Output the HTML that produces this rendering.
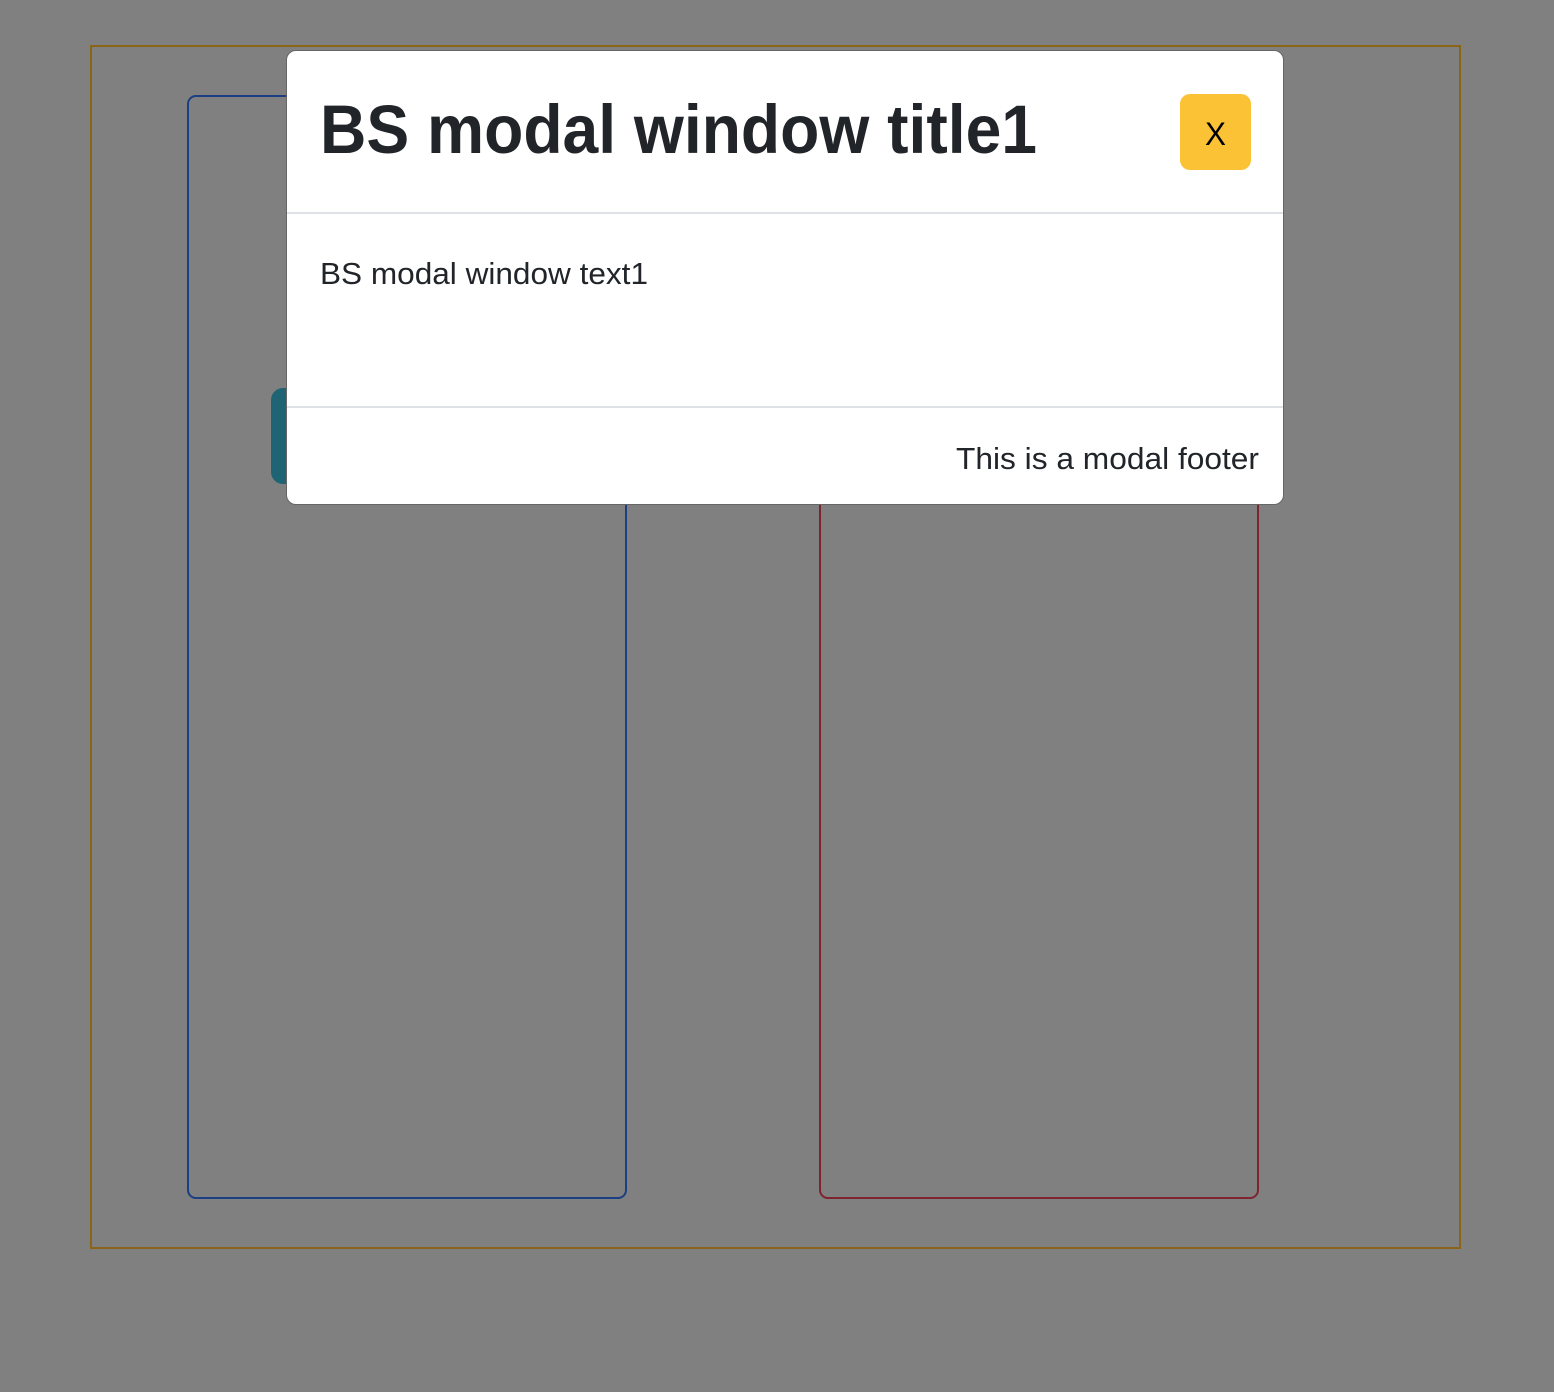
<!DOCTYPE html>
<html><head><style>
html,body{margin:0;padding:0;width:1554px;height:1392px;background:#808080;overflow:hidden;font-family:"Liberation Sans",sans-serif}
.a{position:absolute;box-sizing:border-box}
</style></head><body>
<div class="a" style="left:90px;top:45px;width:1371px;height:1204px;border:2px solid #8a6518"></div>
<div class="a" style="left:187px;top:95px;width:440px;height:1104px;border:2px solid #1b3f82;border-radius:9px"></div>
<div class="a" style="left:819px;top:400px;width:440px;height:799px;border:2px solid #7e2430;border-radius:9px"></div>
<div class="a" style="left:271px;top:388px;width:40px;height:96px;background:#1e6474;border-radius:12px"></div>
<div class="a" style="left:286px;top:50px;width:998px;height:455px;background:#fff;border:1px solid #666;border-radius:10px"></div>
<div class="a" style="left:287px;top:212px;width:996px;height:2px;background:#dee2e6"></div>
<div class="a" style="left:287px;top:406px;width:996px;height:2px;background:#dee2e6"></div>
<div class="a" style="left:1180px;top:94px;width:71px;height:76px;background:#fcc235;border-radius:10px"></div>
<svg class="a" style="left:0;top:0" width="1554" height="1392">
<text x="320" y="153" font-size="69" font-weight="bold" fill="#212529" textLength="717" lengthAdjust="spacingAndGlyphs" font-family="Liberation Sans">BS modal window title1</text>
<text x="320" y="284" font-size="31" fill="#212529" textLength="328" lengthAdjust="spacingAndGlyphs" font-family="Liberation Sans">BS modal window text1</text>
<text x="956" y="469" font-size="31" fill="#212529" textLength="303" lengthAdjust="spacingAndGlyphs" font-family="Liberation Sans">This is a modal footer</text>
<text x="1205" y="145" font-size="32" fill="#000" textLength="21" lengthAdjust="spacingAndGlyphs" font-family="Liberation Sans">X</text>
</svg>
</body></html>
